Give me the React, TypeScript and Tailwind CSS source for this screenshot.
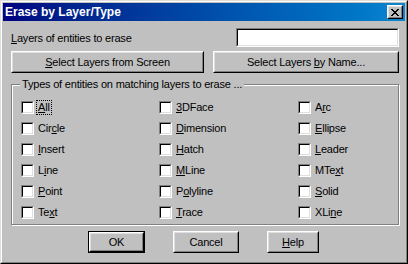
import React from "react";

type Item = { pre: string; key: string; post: string; focus?: boolean };

// each entry: text before the access key, the access key, text after it
const columns: Item[][] = [
  [
    { pre: "", key: "A", post: "ll", focus: true },
    { pre: "Cir", key: "c", post: "le" },
    { pre: "", key: "I", post: "nsert" },
    { pre: "L", key: "i", post: "ne" },
    { pre: "", key: "P", post: "oint" },
    { pre: "Te", key: "x", post: "t" },
  ],
  [
    { pre: "", key: "3", post: "DFace" },
    { pre: "", key: "D", post: "imension" },
    { pre: "", key: "H", post: "atch" },
    { pre: "", key: "M", post: "Line" },
    { pre: "P", key: "o", post: "lyline" },
    { pre: "", key: "T", post: "race" },
  ],
  [
    { pre: "A", key: "r", post: "c" },
    { pre: "", key: "E", post: "llipse" },
    { pre: "", key: "L", post: "eader" },
    { pre: "MTe", key: "x", post: "t" },
    { pre: "", key: "S", post: "olid" },
    { pre: "XLi", key: "n", post: "e" },
  ],
];

function Label({ pre, k, post }: { pre: string; k: string; post: string }) {
  return (
    <span>
      {pre}
      <span className="underline underline-offset-[1px]">{k}</span>
      {post}
    </span>
  );
}

function Button({
  children,
  width,
  isDefault,
}: {
  children: React.ReactNode;
  width: string;
  isDefault?: boolean;
}) {
  const inner = (
    <div className="h-full border border-white border-r-black border-b-black">
      <div className="h-full flex items-center justify-center border border-[#dfdfdf] border-r-[#808080] border-b-[#808080]">
        {children}
      </div>
    </div>
  );
  if (isDefault) {
    return <div className={`h-[22px] border border-black ${width}`}>{inner}</div>;
  }
  return <div className={`h-[22px] ${width}`}>{inner}</div>;
}

function Checkbox() {
  return (
    <div className="w-[13px] h-[13px] border border-[#808080] border-r-white border-b-white">
      <div className="w-full h-full bg-white border border-black border-r-[#dfdfdf] border-b-[#dfdfdf]" />
    </div>
  );
}

export default function App() {
  return (
    <div
      className="w-[408px] h-[264px] text-[11px] leading-[13px] tracking-[-0.2px] text-black bg-[#c0c0c0]"
      style={{ fontFamily: '"Liberation Sans", Arial, sans-serif' }}
    >
      <div className="h-full border border-[#dfdfdf] border-r-black border-b-black">
        <div className="h-full border border-white border-r-[#808080] border-b-[#808080] p-px">
          {/* Title bar */}
          <div className="h-[18px] flex items-center justify-between pl-[2px] pr-[2px] bg-gradient-to-r from-[#000080] to-[#1084d0]">
            <span className="text-white font-bold text-[12px] tracking-normal">Erase by Layer/Type</span>
            <div className="w-[16px] h-[14px] bg-[#c0c0c0] border border-white border-r-black border-b-black">
              <div className="w-full h-full flex items-center justify-center border border-[#dfdfdf] border-r-[#808080] border-b-[#808080]">
                <svg width="8" height="7" viewBox="0 0 8 7" shapeRendering="crispEdges">
                  <path
                    fill="black"
                    d="M0 0h2v1H0zM6 0h2v1H6zM1 1h2v1H1zM5 1h2v1H5zM2 2h4v1H2zM3 3h2v1H3zM2 4h4v1H2zM1 5h2v1H1zM5 5h2v1H5zM0 6h2v1H0zM6 6h2v1H6z"
                  />
                </svg>
              </div>
            </div>
          </div>

          {/* Body */}
          <div className="pl-[8px] pr-[6px]">
            <div className="mt-[7px] flex items-center justify-between h-[19px]">
              <span className="pt-[1px]">
                <Label pre="" k="L" post="ayers of entities to erase" />
              </span>
              <div className="w-[163px] h-[19px] border border-[#808080] border-r-white border-b-white">
                <div className="w-full h-full bg-white border border-black border-r-[#dfdfdf] border-b-[#dfdfdf]" />
              </div>
            </div>

            <div className="mt-[4px] flex justify-between">
              <Button width="w-[193px]">
                <Label pre="" k="S" post="elect Layers from Screen" />
              </Button>
              <Button width="w-[186px]">
                <Label pre="Select Layers " k="b" post="y Name..." />
              </Button>
            </div>

            {/* Group box */}
            <div className="relative mt-[11px] h-[141px] border border-[#808080] shadow-[inset_1px_1px_0_#ffffff,1px_1px_0_#ffffff]">
              <span className="absolute -top-[7px] left-[8px] px-[2px] bg-[#c0c0c0]">
                Types of entities on matching layers to erase ...
              </span>
              <div className="pt-[12px] pl-[9px] grid grid-cols-[138px_139px_1fr]">
                {columns.map((col, ci) => (
                  <div key={ci} className="flex flex-col">
                    {col.map((it, ri) => (
                      <div key={ri} className="h-[21px] flex items-center gap-[3px]">
                        <Checkbox />
                        <span
                          className={
                            it.focus
                              ? "outline outline-1 outline-dotted outline-black px-px"
                              : "px-px"
                          }
                        >
                          <Label pre={it.pre} k={it.key} post={it.post} />
                        </span>
                      </div>
                    ))}
                  </div>
                ))}
              </div>
            </div>

            {/* Bottom buttons */}
            <div className="mt-[6px] pl-[77px] flex gap-[28px]">
              <Button width="w-[57px]" isDefault>
                OK
              </Button>
              <Button width="w-[66px]">Cancel</Button>
              <Button width="w-[52px]">
                <Label pre="" k="H" post="elp" />
              </Button>
            </div>
          </div>
        </div>
      </div>
    </div>
  );
}
